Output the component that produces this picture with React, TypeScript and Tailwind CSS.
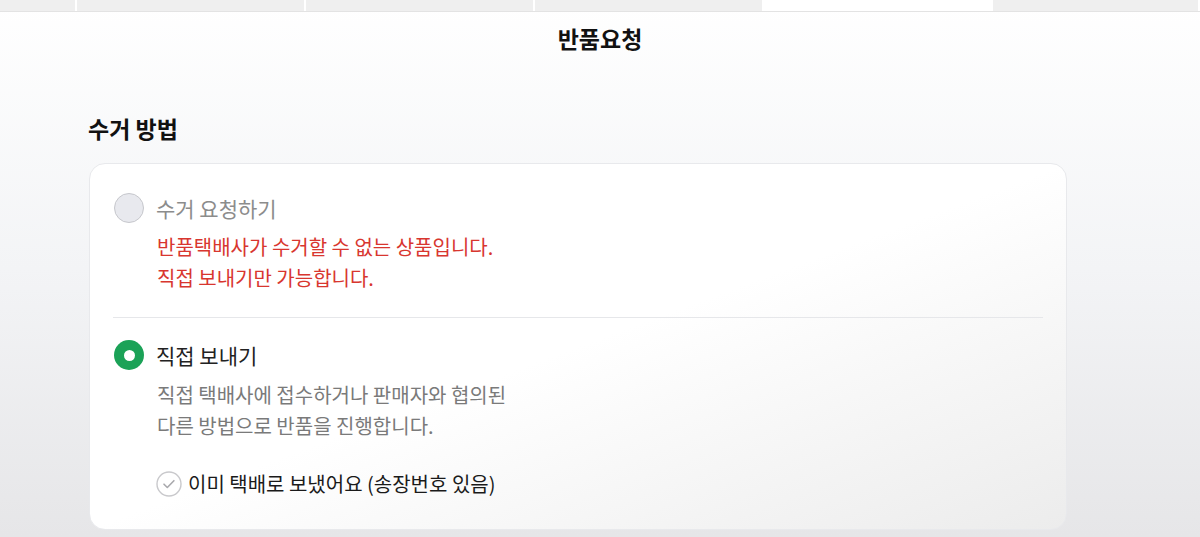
import React from "react";

const tabs = [
  { w: "w-[77px]", active: false },
  { w: "w-[229px]", active: false },
  { w: "w-[229px]", active: false },
  { w: "w-[229px]", active: false },
  { w: "w-[229px]", active: true },
  { w: "flex-1", active: false },
];

function CheckCircle() {
  return (
    <svg width="26" height="26" viewBox="0 0 26 26" className="shrink-0">
      <circle cx="13" cy="13" r="12" fill="#fff" stroke="#c9c9cc" strokeWidth="1.4" />
      <path d="M8 13.2l3.3 3.3 6.6-6.8" fill="none" stroke="#a9a9ad" strokeWidth="1.6" strokeLinecap="round" strokeLinejoin="round" />
    </svg>
  );
}

export default function App() {
  return (
    <div
      className="w-[1200px] h-[537px] overflow-hidden flex flex-col bg-gradient-to-b from-white via-[#f3f4f6] to-[#e6e6e8]"
      style={{ fontFamily: '"Noto Sans CJK KR", "Noto Sans", sans-serif' }}
    >
      {/* tab strip */}
      <div className="flex h-[12px] bg-[#efefef] border-b border-[#e3e3e3] shrink-0">
        {tabs.map((t, i) => (
          <div
            key={i}
            className={`${t.w} h-full border-r-2 border-white ${t.active ? "bg-white" : "bg-[#efefef]"}`}
          />
        ))}
      </div>

      <div className="flex justify-center pt-[9px]">
        <h1 className="text-[23px] font-bold text-[#111] leading-[34px]">반품요청</h1>
      </div>

      <div className="pl-[88px] pr-[133px] pt-[56px]">
        <h2 className="text-[23px] font-bold text-[#111] leading-[34px]">수거 방법</h2>

        <div className="mt-[18px] ml-px h-[367px] rounded-[16px] border border-[#e8e9ec] bg-gradient-to-br from-white via-white to-[#ececec] px-[23px] pt-[29px]">
          {/* option 1 */}
          <div className="flex items-center gap-[12px] pl-px">
            <div className="w-[30px] h-[30px] rounded-full bg-[#e8e9ee] border-[1.5px] border-[#c6c7cc] shrink-0" />
            <span className="text-[21px] text-[#8c8c8c] leading-[30px]">수거 요청하기</span>
          </div>
          <div className="pl-[44px] mt-[8px] text-[20px] leading-[31px] text-[#d8362f]">
            <p>반품택배사가 수거할 수 없는 상품입니다.</p>
            <p>직접 보내기만 가능합니다.</p>
          </div>

          <div className="h-px bg-[#e6e7ea] mt-[24px]" />

          {/* option 2 */}
          <div className="flex items-center gap-[12px] pl-px mt-[22px]">
            <div className="w-[30px] h-[30px] rounded-full bg-[#1ba257] flex items-center justify-center shrink-0">
              <div className="w-[11px] h-[11px] rounded-full bg-white" />
            </div>
            <span className="text-[21px] text-[#222] leading-[30px]">직접 보내기</span>
          </div>
          <div className="pl-[44px] mt-[9px] text-[20px] leading-[31px] text-[#7a7a7a]">
            <p>직접 택배사에 접수하거나 판매자와 협의된</p>
            <p>다른 방법으로 반품을 진행합니다.</p>
          </div>

          <div className="flex items-center gap-[6px] pl-[43px] mt-[28px]">
            <CheckCircle />
            <span className="text-[20px] text-[#1a1a1a] leading-[30px]">이미 택배로 보냈어요 (송장번호 있음)</span>
          </div>
        </div>
      </div>
    </div>
  );
}
